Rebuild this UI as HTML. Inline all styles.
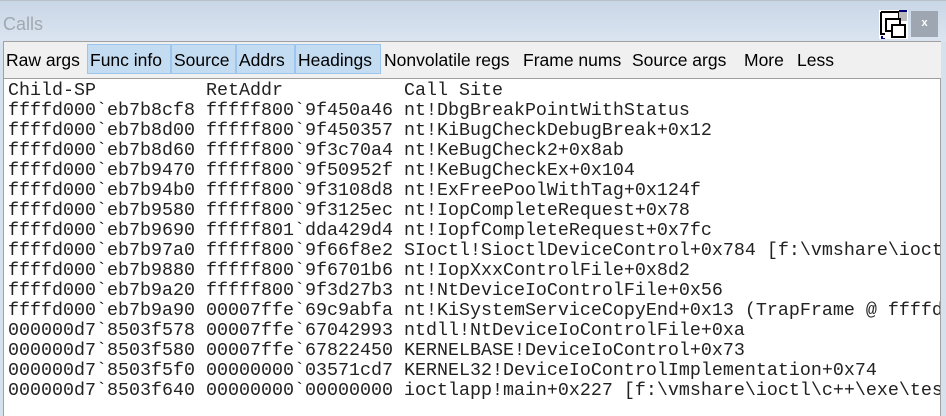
<!DOCTYPE html>
<html><head><style>
body{margin:0;width:946px;height:415px;overflow:hidden;background:#d6e1ee;font-family:"Liberation Sans",sans-serif;position:relative}
.title{position:absolute;left:0;top:0;width:946px;height:41px;background:linear-gradient(#c9d6e6,#dbe5f1);border-top:1px solid #b8c2cc}
.title span{position:absolute;left:3px;top:13px;font-size:18px;color:#a0a8b0}
.close{position:absolute;left:911px;top:10px;width:27px;height:26px;background:#9ea7b1;color:#fff;font-size:11px;text-align:center;line-height:24px;font-weight:bold}
.tb{position:absolute;left:3px;top:41px;width:937px;height:36px;background:#f0f0f0;border-top:1px solid #a0a0a0;border-left:1px solid #a0a0a0}
.b{position:absolute;top:2px;height:30px;font-size:17.5px;line-height:32px;color:#000;white-space:nowrap}
.b.on{background:#c4dcf2;border:1px solid #9cc6ee;box-sizing:border-box;line-height:30px}
.content{position:absolute;left:3px;top:78px;width:936px;height:337px;background:#fff;border-left:1px solid #a0a0a0;border-top:1px solid #a0a0a0;border-right:1px solid #a0a0a0;overflow:hidden}
pre{margin:0;position:absolute;left:4px;top:2px;font-family:"Liberation Mono",monospace;font-size:18.33px;line-height:20px;color:#222}
</style></head><body>
<div class="title"><span>Calls</span>
<svg style="position:absolute;left:879px;top:9px" width="29" height="29" viewBox="0 0 29 29">
<rect x="0" y="0" width="29" height="29" fill="#fff"/>
<path d="M2 2h18v6M2 2v22h4" stroke="#000" stroke-width="2" fill="none"/>
<path d="M3 26v3h3" stroke="#00007a" stroke-width="2" fill="none"/>
<rect x="20" y="1" width="8" height="10" fill="#bbb"/>
<rect x="7" y="9" width="14" height="12" fill="#fff" stroke="#000" stroke-width="2"/>
<rect x="13" y="15" width="13" height="12" fill="#fff" stroke="#000" stroke-width="2"/>
<path d="M20 1h8" stroke="#00007a" stroke-width="2"/>
</svg>
<div class="close">x</div></div>
<div class="tb">
<div class="b" style="left:2px">Raw args</div>
<div class="b on" style="left:83px;width:84px;padding-left:2px">Func info</div>
<div class="b on" style="left:167px;width:65px;padding-left:2px">Source</div>
<div class="b on" style="left:232px;width:59px;padding-left:2px">Addrs</div>
<div class="b on" style="left:291px;width:86px;padding-left:2px">Headings</div>
<div class="b" style="left:380px">Nonvolatile regs</div>
<div class="b" style="left:519px">Frame nums</div>
<div class="b" style="left:628px">Source args</div>
<div class="b" style="left:740px">More</div>
<div class="b" style="left:793px">Less</div>
</div>
<div class="content"><pre>Child-SP          RetAddr           Call Site
ffffd000`eb7b8cf8 fffff800`9f450a46 nt!DbgBreakPointWithStatus
ffffd000`eb7b8d00 fffff800`9f450357 nt!KiBugCheckDebugBreak+0x12
ffffd000`eb7b8d60 fffff800`9f3c70a4 nt!KeBugCheck2+0x8ab
ffffd000`eb7b9470 fffff800`9f50952f nt!KeBugCheckEx+0x104
ffffd000`eb7b94b0 fffff800`9f3108d8 nt!ExFreePoolWithTag+0x124f
ffffd000`eb7b9580 fffff800`9f3125ec nt!IopCompleteRequest+0x78
ffffd000`eb7b9690 fffff801`dda429d4 nt!IopfCompleteRequest+0x7fc
ffffd000`eb7b97a0 fffff800`9f66f8e2 SIoctl!SioctlDeviceControl+0x784 [f:\vmshare\ioctl
ffffd000`eb7b9880 fffff800`9f6701b6 nt!IopXxxControlFile+0x8d2
ffffd000`eb7b9a20 fffff800`9f3d27b3 nt!NtDeviceIoControlFile+0x56
ffffd000`eb7b9a90 00007ffe`69c9abfa nt!KiSystemServiceCopyEnd+0x13 (TrapFrame @ ffffd
000000d7`8503f578 00007ffe`67042993 ntdll!NtDeviceIoControlFile+0xa
000000d7`8503f580 00007ffe`67822450 KERNELBASE!DeviceIoControl+0x73
000000d7`8503f5f0 00000000`03571cd7 KERNEL32!DeviceIoControlImplementation+0x74
000000d7`8503f640 00000000`00000000 ioctlapp!main+0x227 [f:\vmshare\ioctl\c++\exe\tes</pre></div>
</body></html>
